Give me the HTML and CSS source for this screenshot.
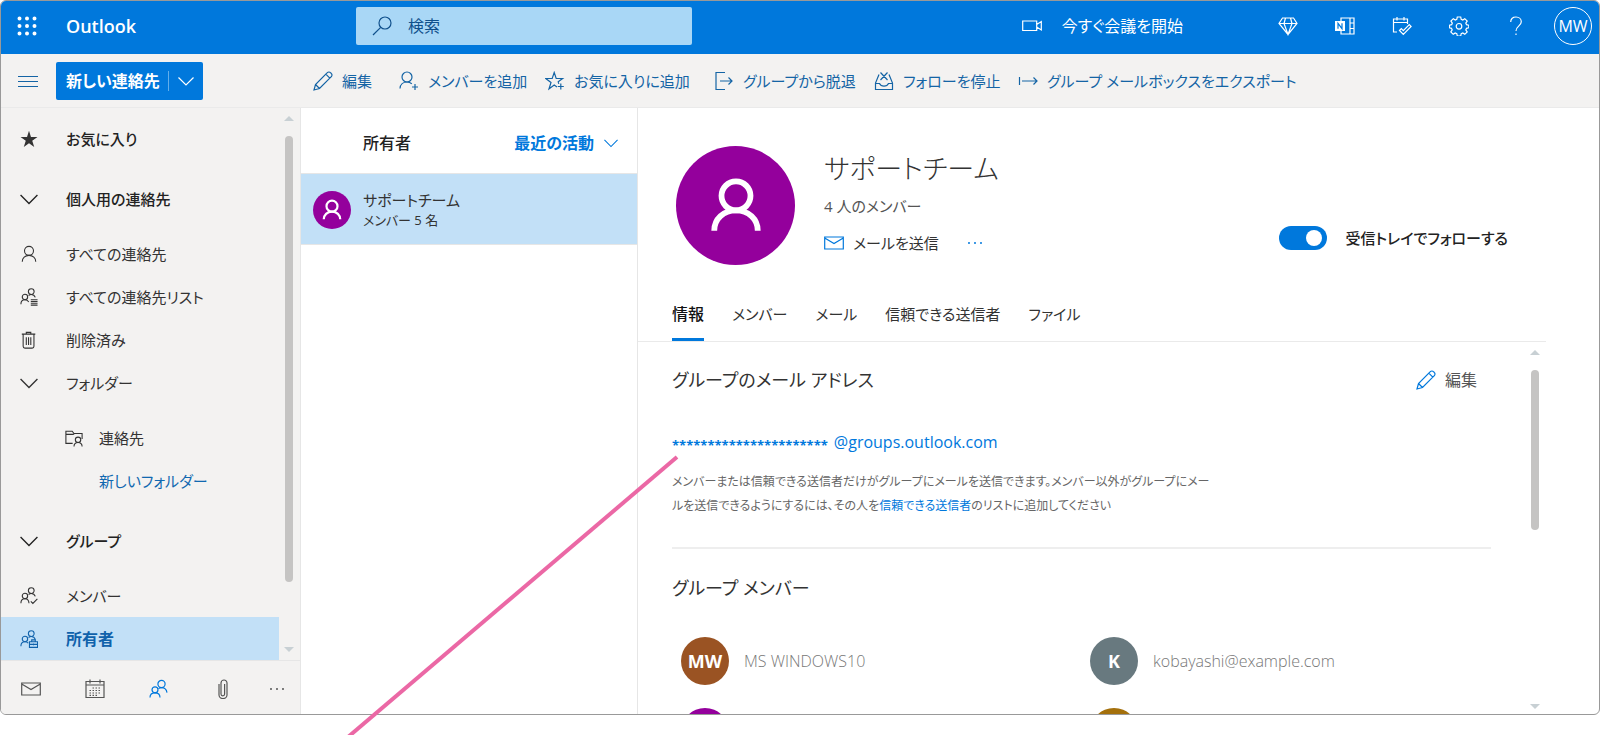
FILE: index.html
```html
<!DOCTYPE html>
<html lang="ja">
<head>
<meta charset="utf-8">
<title>Outlook</title>
<link rel="stylesheet" href="styles.css">
</head>
<body>
<svg class="symbols" aria-hidden="true">
  <symbol id="chevron" viewBox="0 0 16 16"><path d="M.5 4.500l7.500 7.500 7.500-7.500"/></symbol>
  <symbol id="pencil" viewBox="0 0 20 20"><path d="M1 19l1.500-5.500L14.300 1.700a2.200 2.200 0 0 1 3.200 0l.8.800a2.200 2.200 0 0 1 0 3.200L6.500 17.500zM12.800 3.200l4 4M2.500 13.500l4 4"/></symbol>
  <symbol id="person" viewBox="0 0 20 20"><circle cx="10" cy="6.500" r="5"/><path d="M2.500 18.500c0-4 3.200-7 7.500-7s7.500 3 7.500 7"/></symbol>
  <symbol id="person-add" viewBox="0 0 20 20"><circle cx="8" cy="6" r="5"/><path d="M1 17.500c.3-4 3.200-6.500 7-6.500 2 0 3.600.7 4.800 1.800M16 13v6M13 16h6"/></symbol>
  <symbol id="star-add" viewBox="0 0 20 20"><path d="M12 16l-2.800-2L4 18l2-6.500L.8 7.500h6.400L9.200 1.500l2 6h6.400l-4.400 3.300.6 2M15.800 12.500v6M12.800 15.500h6"/></symbol>
  <symbol id="leave" viewBox="0 0 20 20"><path d="M11 1.500H2v17h9M6 10h12M14.500 6.500L18 10l-3.500 3.500"/></symbol>
  <symbol id="unfollow" viewBox="0 0 20 20"><path d="M5 3.500L1.500 12v6.500h17V12L15 3.500M1.500 12.500h4c.8 1.800 2.200 2.700 4.500 2.700s3.700-.9 4.500-2.700h4M6.500 1.500l7 7.500M13.500 1.500l-7 7.500"/></symbol>
  <symbol id="export" viewBox="0 0 20 20"><path d="M1.500 6v8M4 10h15M15.500 6.500L19 10l-3.500 3.500"/></symbol>
  <symbol id="people" viewBox="0 0 20 20"><circle cx="12.500" cy="5" r="3.600"/><circle cx="6" cy="10.800" r="3"/><path d="M1 18.500c0-3 2-4.700 5-4.700s5 1.700 5 4.700M9.500 9.600c.9-.7 1.900-1 3-1 3 0 5 1.900 5.500 5"/></symbol>
  <symbol id="people-list" viewBox="0 0 20 20"><circle cx="12.500" cy="4" r="3.200"/><circle cx="5.500" cy="10" r="3"/><path d="M1 18c0-3 1.800-5 4.500-5 2 0 3.500 1 4.200 2.600M9.500 8.300c.9-.7 1.900-1.100 3-1.100 2.200 0 3.800 1.200 4.500 3.300M12 13h7.500M12 15h7.500M12 17h7.500M12 19h7.500"/></symbol>
  <symbol id="people-check" viewBox="0 0 20 20"><circle cx="12.500" cy="4" r="3.200"/><circle cx="5.500" cy="10" r="3"/><path d="M1 18c0-3 1.800-5 4.500-5s4.300 1.800 4.500 5M9.500 8.300c.9-.7 1.900-1.100 3-1.100 2.200 0 3.800 1.200 4.500 3.300M12 16l2.300 2.300 5-5"/></symbol>
  <symbol id="people-owner" viewBox="0 0 20 20"><circle cx="12.500" cy="4" r="3.200"/><circle cx="5.500" cy="10" r="3"/><path d="M1 18c0-3 1.800-5 4.500-5 1.600 0 2.800.6 3.600 1.600M9.500 8.300c.9-.7 1.900-1.100 3-1.100 2.200 0 3.800 1.200 4.500 3.300M10.500 13h9v6.300h-9zM13 13v-2h4v2M10.500 16h9M15 15v2"/></symbol>
  <symbol id="trash" viewBox="0 0 20 20"><path d="M2 3.500h15M7 3.500v-2h5v2M3.500 3.500v13.500q0 2 2 2h8q2 0 2-2V3.500M7 7v8.500M9.500 7v8.500M12 7v8.500"/></symbol>
  <symbol id="folder-person" viewBox="0 0 20 20"><path d="M8.500 16H1V2.500h7l2 2.500h9v6M1 6h8l1.500-1"/><circle cx="14.500" cy="12" r="3"/><path d="M10 19.500c0-2.800 1.800-4.500 4.500-4.500s4.500 1.700 4.500 4.500"/></symbol>
  <symbol id="mail" viewBox="0 0 20 20"><path d="M.7 4h18.600v12H.7zM.7 5L10 10.500 19.300 5"/></symbol>
  <symbol id="calendar" viewBox="0 0 20 20"><path d="M1 2.500h18v16H1zM1 6h18M5 .5v4M15 .5v4"/><path stroke-dasharray="1.500 1.500" d="M7.500 9h9M4.500 11.500h12M4.500 14h12M4.500 16.300h8"/></symbol>
  <symbol id="clip" viewBox="0 0 20 20"><path d="M6 5v11a4 3.500 0 0 0 8 0V4a3 3 0 0 0-6 0v11a1.800 1.800 0 0 0 3.600 0V5"/></symbol>
  <symbol id="search" viewBox="0 0 20 20"><circle cx="13" cy="7" r="6"/><path d="M8.700 11.300L1 19"/></symbol>
  <symbol id="camera" viewBox="0 0 20 20"><path d="M.7 5h14v9.500H.7zM14.700 8.500L19.300 5.500v8.500l-4.600-3"/></symbol>
  <symbol id="diamond" viewBox="0 0 20 20"><path d="M4.500 2h11L19 7.500 10 18.500 1 7.500zM1 7.500h18M7.500 2L6 7.500l4 11 4-11L12.500 2"/></symbol>
  <symbol id="notebook" viewBox="0 0 20 20"><path d="M6 5V2h13v16H6v-3M15 2v16M15 7h4M15 12.500h4"/><path class="solid" d="M0 5h10v10H0z"/><path class="cut" d="M3 12.800V7.300l4 5.400V7.200"/></symbol>
  <symbol id="todo" viewBox="0 0 20 20"><path d="M5 16H1.500V3h14v5M1.500 6.500h14M5 1v3.500M12 1v3.500M7.500 14.500l1.800-1.800 2 2 6-6 1.800 1.800-7.800 7.800z"/></symbol>
  <symbol id="gear" viewBox="0 0 20 20"><path d="M8.300 1h3.400l.5 2.400 1.600.7 2-1.400 2.400 2.400-1.400 2 .7 1.600 2.300.5v2.600l-2.300.5-.7 1.600 1.400 2-2.400 2.400-2-1.400-1.600.7-.5 2.400H8.300l-.5-2.400-1.600-.7-2 1.400-2.400-2.400 1.400-2-.7-1.600L.5 11.800V9.200l2.200-.5.600-1.600-1.400-2 2.400-2.400 2 1.400 1.500-.7z"/><circle cx="10" cy="10.300" r="2.800"/></symbol>
  <symbol id="help" viewBox="0 0 20 20"><path d="M4.700 6c0-3 2.200-5 5.300-5s5.300 2 5.300 4.800c0 4-5.300 4.200-5.300 9.200M10 17.500V19"/></symbol>
</svg>

<div class="app">
  <header class="header">
    <button class="apps" aria-label="アプリ起動ツール"><svg viewBox="0 0 20 20"><path d="M2.500 2.500h0M10 2.500h0M17.500 2.500h0M2.500 10h0M10 10h0M17.500 10h0M2.500 17.500h0M10 17.500h0M17.500 17.500h0"/></svg></button>
    <span class="brand">Outlook</span>
    <label class="search"><svg class="icon"><use href="#search"/></svg><input type="text" placeholder="検索" aria-label="検索"></label>
    <button class="meet"><svg class="icon"><use href="#camera"/></svg>今すぐ会議を開始</button>
    <div class="header-icons">
      <button aria-label="Premium"><svg class="icon"><use href="#diamond"/></svg></button>
      <button aria-label="OneNote"><svg class="icon"><use href="#notebook"/></svg></button>
      <button aria-label="予定"><svg class="icon"><use href="#todo"/></svg></button>
      <button aria-label="設定"><svg class="icon"><use href="#gear"/></svg></button>
      <button aria-label="ヘルプ"><svg class="icon"><use href="#help"/></svg></button>
    </div>
    <button class="me">MW</button>
  </header>

  <div class="toolbar">
    <button class="menu" aria-label="メニュー"><svg class="icon" viewBox="0 0 20 20"><path d="M0 5.500h20M0 10.500h20M0 15.500h20"/></svg></button>
    <div class="new"><button>新しい連絡先</button><button class="new-more" aria-label="その他"><svg class="icon"><use href="#chevron"/></svg></button></div>
    <div class="commands">
      <button><svg class="icon"><use href="#pencil"/></svg>編集</button>
      <button><svg class="icon"><use href="#person-add"/></svg>メンバーを追加</button>
      <button><svg class="icon"><use href="#star-add"/></svg>お気に入りに追加</button>
      <button><svg class="icon"><use href="#leave"/></svg>グループから脱退</button>
      <button><svg class="icon"><use href="#unfollow"/></svg>フォローを停止</button>
      <button><svg class="icon"><use href="#export"/></svg>グループ メールボックスをエクスポート</button>
    </div>
  </div>

  <div class="columns">
    <aside class="sidebar">
      <div class="side-scroll">
        <nav class="nav">
          <button class="strong"><svg class="star" viewBox="0 0 20 20"><path d="M10 .8l2.200 6.900h7.200l-5.800 4.300 2.200 7L10 14.700 4.200 19l2.200-7L.6 7.700h7.200z"/></svg>お気に入り</button>
          <button class="strong group"><svg class="icon"><use href="#chevron"/></svg>個人用の連絡先</button>
          <button><svg class="icon"><use href="#person"/></svg>すべての連絡先</button>
          <button><svg class="icon"><use href="#people-list"/></svg>すべての連絡先リスト</button>
          <button><svg class="icon"><use href="#trash"/></svg>削除済み</button>
          <button class="folders"><svg class="icon"><use href="#chevron"/></svg>フォルダー</button>
          <button class="child"><svg class="icon"><use href="#folder-person"/></svg>連絡先</button>
          <button class="child link"><span class="blank"></span>新しいフォルダー</button>
          <button class="strong group"><svg class="icon"><use href="#chevron"/></svg>グループ</button>
          <button><svg class="icon"><use href="#people-check"/></svg>メンバー</button>
          <button class="current"><svg class="icon"><use href="#people-owner"/></svg>所有者</button>
        </nav>
        <div class="scrollbar"><i class="up"></i><div class="track"><div class="thumb"></div></div><i class="down"></i></div>
      </div>
      <div class="modules">
        <button aria-label="メール"><svg class="icon"><use href="#mail"/></svg></button>
        <button aria-label="予定表"><svg class="icon"><use href="#calendar"/></svg></button>
        <button class="on" aria-label="連絡先"><svg class="icon"><use href="#people"/></svg></button>
        <button aria-label="ファイル"><svg class="icon"><use href="#clip"/></svg></button>
        <button class="rest" aria-label="その他"><svg class="dots" viewBox="0 0 16 4"><path d="M2 2h0M8 2h0M14 2h0"/></svg></button>
      </div>
    </aside>

    <section class="list">
      <div class="list-head"><h2>所有者</h2><button>最近の活動<svg class="icon"><use href="#chevron"/></svg></button></div>
      <button class="entry">
        <span class="face small"><svg viewBox="0 0 20 20"><use href="#person"/></svg></span>
        <span><span class="entry-name">サポートチーム</span><span class="entry-sub">メンバー 5 名</span></span>
      </button>
    </section>

    <main class="detail">
      <div class="profile">
        <span class="face large"><svg viewBox="0 0 20 20"><use href="#person"/></svg></span>
        <div class="who">
          <h1>サポートチーム</h1>
          <p>4 人のメンバー</p>
          <div class="actions"><button><svg class="icon"><use href="#mail"/></svg>メールを送信</button><button aria-label="その他"><svg class="dots" viewBox="0 0 16 4"><path d="M2 2h0M8 2h0M14 2h0"/></svg></button></div>
        </div>
        <label class="follow"><input type="checkbox" role="switch" checked>受信トレイでフォローする</label>
      </div>
      <div class="tabs">
        <button class="active">情報</button><button>メンバー</button><button>メール</button><button>信頼できる送信者</button><button>ファイル</button>
      </div>
      <div class="detail-scroll">
        <div class="info">
          <div class="info-head"><h2>グループのメール アドレス</h2><button><svg class="icon"><use href="#pencil"/></svg>編集</button></div>
          <a class="address" href="#"><span class="mask">**********************</span><span>@groups.outlook.com</span></a>
          <p class="note">メンバーまたは信頼できる送信者だけがグループにメールを送信できます。メンバー以外がグループにメー<br>ルを送信できるようにするには、その人を<a href="#">信頼できる送信者</a>のリストに追加してください</p>
          <h2 class="members-title">グループ メンバー</h2>
          <ul class="members">
            <li><span class="badge brown">MW</span>MS WINDOWS10</li>
            <li><span class="badge slate">K</span>kobayashi@example.com</li>
            <li><span class="badge purple"></span></li>
            <li><span class="badge gold"></span></li>
          </ul>
        </div>
        <div class="scrollbar"><i class="up"></i><div class="track"><div class="thumb"></div></div><i class="down"></i></div>
      </div>
    </main>
  </div>
</div>
<svg class="pointer" viewBox="0 0 340 290" aria-hidden="true"><path d="M336 12L0 298"/></svg>
</body>
</html>
```

FILE: styles.css
```css
* { box-sizing: border-box; }

body {
  margin: 0;
  height: 100vh;
  overflow: hidden;
  background: #fff;
  color: #333;
  font: 16px/24px "Open Sans", "Noto Sans CJK JP", sans-serif;
  font-feature-settings: "palt";
}

h1, h2, p, ul { margin: 0; padding: 0; font-weight: 400; }

button {
  display: flex;
  align-items: center;
  padding: 0;
  border: 0;
  background: none;
  color: inherit;
  font: inherit;
  font-feature-settings: inherit;
  text-align: left;
  white-space: nowrap;
}

a { color: #0078dc; text-decoration: none; }

.symbols { display: none; }

.icon {
  flex: none;
  width: 20px;
  height: 20px;
  fill: none;
  stroke: currentColor;
  stroke-width: 1.2;
}
.solid { fill: #fff; stroke: none; }
.cut { stroke: #0078dc; }

.dots {
  width: 16px;
  height: 4px;
  stroke: currentColor;
  stroke-width: 2;
  stroke-linecap: round;
}

.app {
  display: flex;
  flex-direction: column;
  height: calc(100vh - 20px);
  border: 1px solid #999;
  border-radius: 6px;
  overflow: hidden;
}

/* header */
.header {
  display: flex;
  align-items: center;
  flex: none;
  height: 53px;
  padding: 0 7px 3px 16px;
  background: #0078dc;
  color: #fff;
}
.apps svg {
  width: 20px;
  height: 20px;
  stroke: #fff;
  stroke-width: 4;
  stroke-linecap: round;
}
.brand { width: 290px; margin-left: 29px; font-size: 18px; font-weight: 600; }
.search {
  display: flex;
  align-items: center;
  gap: 14px;
  width: 336px;
  height: 38px;
  padding: 0 16px;
  border-radius: 2px;
  background: #a9d7f6;
  color: #10508c;
}
.search input {
  width: 100%;
  border: 0;
  outline: 0;
  background: none;
  color: inherit;
  font: inherit;
}
.search input::placeholder { color: #10508c; opacity: 1; }
.meet { gap: 20px; margin-left: auto; margin-right: 76px; }
.header-icons { display: flex; }
.header-icons button { justify-content: center; width: 57px; }
.me {
  justify-content: center;
  width: 38px;
  height: 38px;
  margin-left: 10px;
  border: 1px solid #fff;
  border-radius: 50%;
}

/* toolbar */
.toolbar {
  display: flex;
  align-items: center;
  flex: none;
  height: 54px;
  padding-left: 17px;
  border-bottom: 1px solid #eaeaea;
  background: #f3f2f1;
  color: #1464a5;
}
.new {
  display: flex;
  align-items: center;
  width: 147px;
  height: 38px;
  margin: 0 110px 0 18px;
  padding-left: 10px;
  border-radius: 2px;
  background: #0078dc;
  color: #fff;
  font-weight: 700;
}
.new-more {
  height: 20px;
  margin-left: auto;
  padding: 0 9px;
  border-left: 1px solid #62aeeb;
}
.new-more .icon { width: 16px; height: 16px; }
.commands {
  display: grid;
  grid-template-columns: 86px 146px 169px 160px 144px auto;
  font-size: 15px;
}
.commands button { gap: 9px; }

.columns { display: flex; flex: 1; min-height: 0; }

/* sidebar */
.sidebar {
  display: flex;
  flex-direction: column;
  flex: none;
  width: 300px;
  border-right: 1px solid #e6e6e6;
  background: #f3f2f1;
}
.side-scroll { display: flex; flex: 1; min-height: 0; }
.nav { width: 278px; padding-top: 9px; overflow: hidden; font-size: 15px; }
.nav button { gap: 28px; width: 100%; height: 43px; padding-left: 19px; }
.nav .icon, .star { width: 18px; height: 18px; }
.nav .strong { color: #222; font-weight: 500; }
.nav .group { margin: 17px 0 12px; }
.nav .folders { margin-bottom: 12px; }
.nav .child { gap: 16px; padding-left: 64px; }
.nav .link { color: #1068b0; }
.blank { width: 18px; }
.nav .current { background: #c2e0f7; color: #1062ab; font-size: 16px; font-weight: 700; }
.star { fill: #333; }

.scrollbar {
  display: flex;
  flex-direction: column;
  align-items: center;
  width: 8px;
}
.scrollbar i {
  border: solid transparent;
  border-width: 0 5px;
}
.scrollbar .up { border-bottom: 5px solid #c8d0d4; }
.scrollbar .down { border-top: 5px solid #c8d0d4; }
.track { flex: 1; width: 8px; margin: 15px 0; }
.thumb { height: 90%; border-radius: 4px; background: #c5c4c3; }
.side-scroll .scrollbar { margin-left: 6px; padding: 8px 0; }

.modules {
  display: flex;
  align-items: center;
  gap: 44px;
  flex: none;
  height: 54px;
  padding: 2px 15px 0 20px;
  border-top: 1px solid #e6e6e6;
  color: #555;
}
.modules .on { color: #0078dc; }
.modules .rest { margin: 0 0 0 auto; }
.modules button:nth-child(4) { margin-right: -44px; }

/* list */
.list { flex: none; width: 337px; border-right: 1px solid #e6e6e6; }
.list-head {
  display: flex;
  align-items: center;
  justify-content: space-between;
  height: 66px;
  padding: 4px 19px 0 62px;
  border-bottom: 1px solid #e6e6e6;
}
.list-head h2 { font-size: 16px; font-weight: 500; color: #222; }
.list-head button { gap: 10px; color: #0078dc; font-weight: 700; }
.list-head .icon { width: 14px; height: 14px; }
.entry {
  gap: 12px;
  width: 100%;
  height: 71px;
  padding: 2px 0 0 12px;
  border-bottom: 1px solid #e6e6e6;
  background: #c2e0f7;
}
.entry-name, .entry-sub { display: block; line-height: 20px; }
.entry-name { font-size: 15px; }
.entry-sub { font-size: 13px; }

.face {
  display: flex;
  align-items: center;
  justify-content: center;
  flex: none;
  border-radius: 50%;
  background: #94009c;
}
.face svg { fill: none; stroke: #fff; }
.small { width: 38px; height: 38px; }
.small svg { width: 22px; height: 22px; stroke-width: 2; }
.large { width: 119px; height: 119px; }
.large svg { width: 58px; height: 58px; stroke-width: 2; }

/* detail */
.detail { display: flex; flex: 1; flex-direction: column; min-width: 0; }
.profile { display: flex; padding: 38px 91px 0 38px; }
.who { margin-left: 29px; }
.who h1 { font-size: 27px; font-weight: 300; line-height: 46px; }
.who p { margin-top: 4px; font-size: 15px; line-height: 20px; color: #555; }
.actions { display: flex; gap: 28px; margin-top: 15px; color: #0078dc; font-size: 15px; }
.actions button:first-child { gap: 9px; color: #333; }
.actions .icon { color: #0078dc; }
.follow {
  display: flex;
  align-items: center;
  gap: 19px;
  margin: 64px 0 0 auto;
  color: #222;
  font-size: 15px;
  font-weight: 500;
}
.follow input {
  appearance: none;
  width: 48px;
  height: 24px;
  margin: 0;
  padding: 4px 5px;
  border-radius: 12px;
  background: #0078dc;
}
.follow input::after {
  content: "";
  display: block;
  width: 16px;
  height: 16px;
  margin-left: auto;
  border-radius: 50%;
  background: #fff;
}
.tabs {
  display: flex;
  flex: none;
  gap: 28px;
  height: 53px;
  margin: 24px 53px 0 0;
  padding-left: 34px;
  border-bottom: 1px solid #eaeaea;
  font-size: 15px;
}
.tabs button { border-bottom: 3px solid transparent; }
.tabs .active { border-color: #0078dc; color: #111; font-size: 16px; font-weight: 500; }

.detail-scroll { display: flex; flex: 1; min-height: 0; overflow: hidden; }
.info { flex: 1; padding: 26px 40px 0 34px; }
.info-head { display: flex; justify-content: space-between; padding-right: 14px; }
.info h2 { font-size: 18px; }
.info-head button { gap: 9px; color: #555; }
.info-head .icon { color: #0078dc; }
.address { display: flex; gap: 6px; margin-top: 38px; }
.mask { font-size: 13px; font-weight: 700; line-height: 30px; height: 24px; }
.note {
  padding: 16px 0 29px;
  border-bottom: 2px solid #eee;
  color: #666;
  font-size: 12px;
}
.info .members-title { margin-top: 27px; }
.members {
  display: grid;
  grid-template-columns: 1fr 1fr;
  gap: 23px 0;
  margin: 37px -8px 0 0;
  padding-left: 9px;
  list-style: none;
}
.members li {
  display: flex;
  align-items: center;
  gap: 15px;
  color: #777;
  font-weight: 300;
}
.badge {
  display: flex;
  align-items: center;
  justify-content: center;
  width: 48px;
  height: 48px;
  border-radius: 50%;
  color: #fff;
  font-size: 18px;
  font-weight: 700;
}
.brown { background: #9a5323; }
.slate { background: #68797f; }
.purple { background: #94009c; }
.gold { background: #a4700c; }
.detail-scroll .scrollbar { margin-right: 60px; padding: 8px 0 5px; }
.detail-scroll .thumb { height: 50%; }

/* callout line drawn over the window */
.pointer {
  position: absolute;
  left: 341px;
  bottom: 0;
  width: 340px;
  height: 290px;
  fill: none;
  stroke: #eb68a5;
  stroke-width: 4;
}
```
